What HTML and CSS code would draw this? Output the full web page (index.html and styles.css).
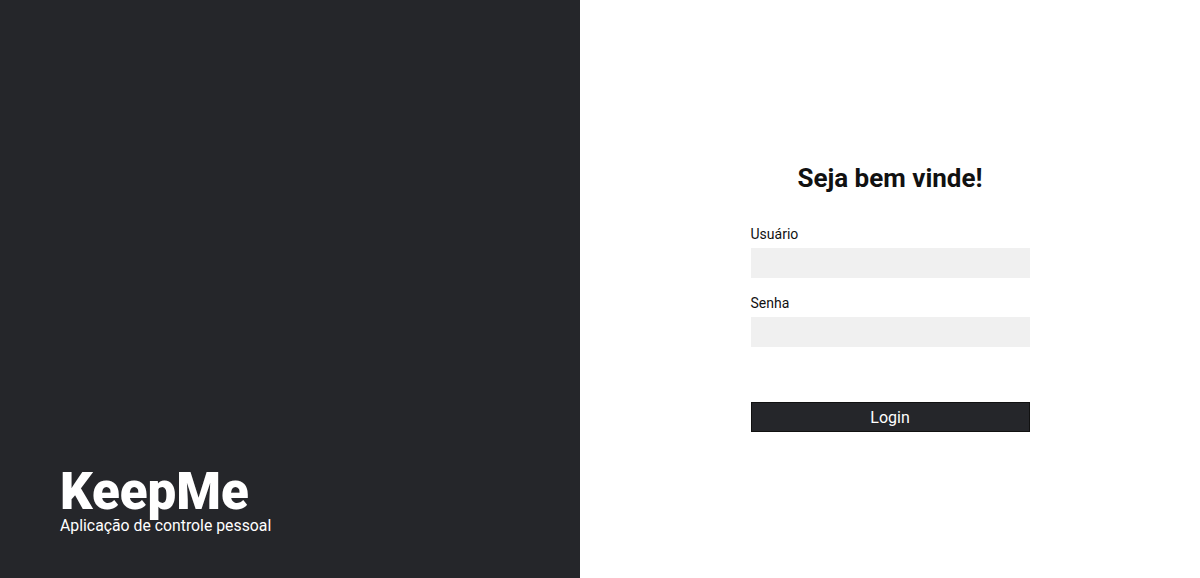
FILE: index.html
```html
<!DOCTYPE html>
<html lang="pt-BR">
<head>
<meta charset="utf-8">
<title>KeepMe</title>
<link rel="stylesheet" href="styles.css">
</head>
<body>
<div class="page">
  <aside class="brand">
    <h1 class="brand-name">KeepMe</h1>
    <p class="brand-tag">Aplicação de controle pessoal</p>
  </aside>
  <main class="auth">
    <form class="login-form">
      <h2 class="login-title">Seja bem vinde!</h2>
      <label class="field-label" for="user">Usuário</label>
      <input class="field-input" id="user" type="text">
      <label class="field-label field-label-second" for="pass">Senha</label>
      <input class="field-input" id="pass" type="password">
      <button class="login-btn" type="button">Login</button>
    </form>
  </main>
</div>
</body>
</html>
```
FILE: styles.css
```css
* { box-sizing: border-box; }
html, body { margin: 0; padding: 0; }
body {
  font-family: Roboto, "Liberation Sans", sans-serif;
  background: #fff;
}
.page {
  display: flex;
  width: 1200px;
  height: 578px;
}
.brand {
  width: 580px;
  flex: none;
  background: #25262a;
  display: flex;
  flex-direction: column;
  justify-content: flex-end;
  padding: 0 0 43px 60px;
  color: #fff;
}
.brand-name {
  margin: 0;
  font-size: 51px;
  font-weight: 900;
  line-height: 40px;
}
.brand-tag {
  margin: 5px 0 0;
  font-size: 15.8px;
  line-height: 18px;
  font-weight: 400;
}
.auth {
  flex: 1;
  display: flex;
  justify-content: center;
  padding-top: 163px;
}
.login-form {
  width: 279px;
  display: flex;
  flex-direction: column;
}
.login-title {
  margin: 0 0 34px;
  text-align: center;
  font-size: 26px;
  line-height: 30px;
  font-weight: 700;
  color: #111;
}
.field-label {
  font-size: 14px;
  line-height: 14px;
  color: #111;
  margin-bottom: 7px;
}
.field-label-second { margin-top: 18px; margin-bottom: 7px; }
.field-input {
  height: 30px;
  border: none;
  background: #f0f0f0;
  outline: none;
  padding: 0 8px;
}
.login-btn {
  margin-top: 55px;
  height: 30px;
  background: #25262a;
  color: #fff;
  border: 1px solid #111;
  font-family: Roboto, "Liberation Sans", sans-serif;
  font-size: 16px;
  font-weight: 400;
  padding: 0;
}
```
